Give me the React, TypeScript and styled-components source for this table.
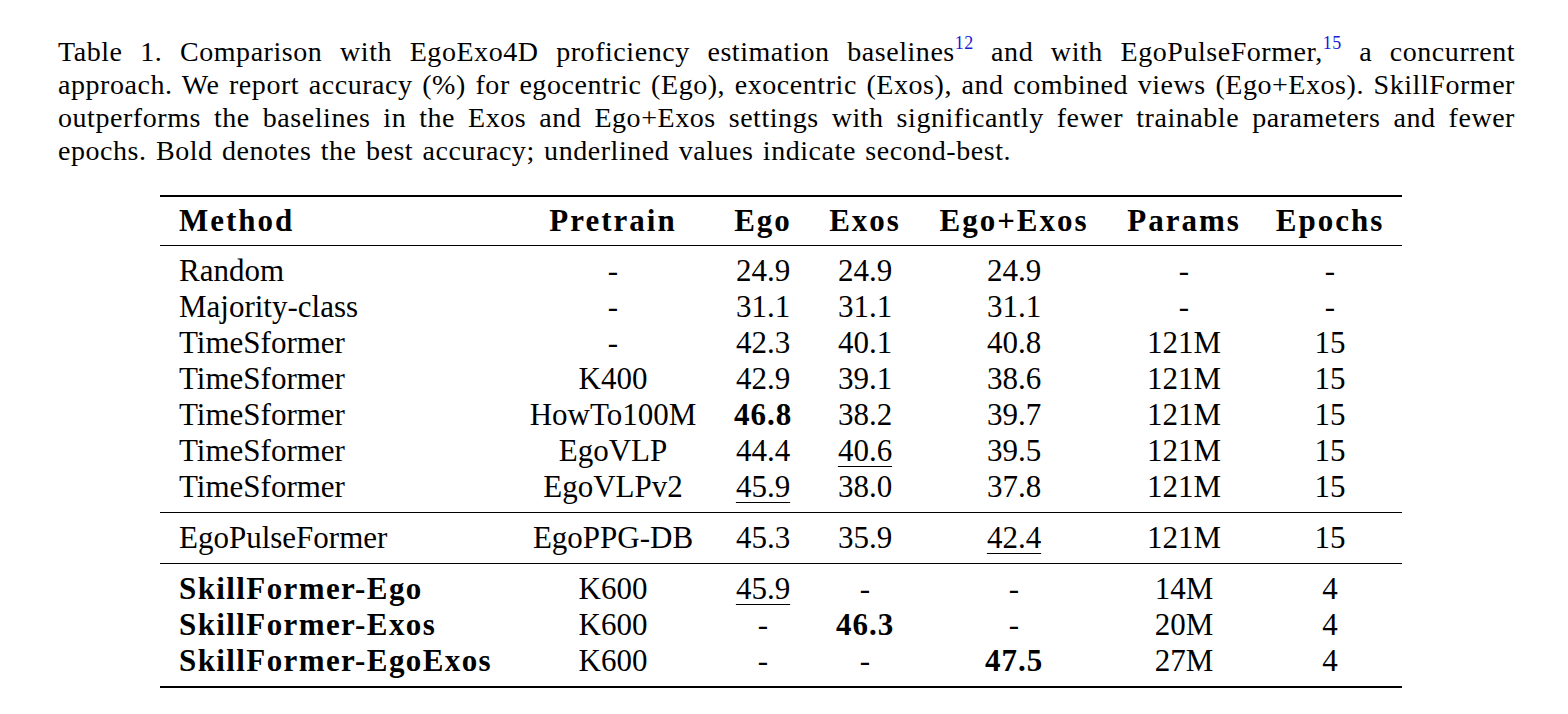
import React from "react";
import styled, { createGlobalStyle, css } from "styled-components";

const Global = createGlobalStyle`
  html, body { margin: 0; padding: 0; background: #ffffff; }
`;

const Page = styled.div`
  padding-top: 35px;
  width: 1568px;
  color: #000;
`;

const Caption = styled.div`
  margin: 0 53px 0 58px;
  font-family: "Liberation Serif";
  font-size: 28px;
  line-height: 33px;
  letter-spacing: 0.55px;
  word-spacing: 1.8px;
`;

const CapLine = styled.div<{ $last?: boolean }>`
  white-space: nowrap;
  text-align: ${(p) => (p.$last ? "left" : "justify")};
  text-align-last: ${(p) => (p.$last ? "left" : "justify")};
`;

const Ref = styled.sup`
  color: #1a1ad6;
  font-size: 18px;
  line-height: 0;
  vertical-align: 12px;
  letter-spacing: 0.3px;
`;

const Table = styled.div`
  width: 1242px;
  margin: 28px 0 0 160px;
  border-top: 2px solid #000;
  border-bottom: 2px solid #000;
  font-family: "Liberation Serif";
  font-size: 31px;
`;

const cols = "352px 202px 98px 106px 192px 148px 144px";

const HeadRow = styled.div`
  display: grid;
  grid-template-columns: ${cols};
  height: 48px;
  align-items: center;
  border-bottom: 1px solid #000;
  font-weight: 700;
  letter-spacing: 2px;
`;

const Group = styled.div<{ $last?: boolean }>`
  padding: 7px 0;
  ${(p) =>
    !p.$last &&
    css`
      border-bottom: 1px solid #000;
    `}
`;

const Row = styled.div`
  display: grid;
  grid-template-columns: ${cols};
  height: 36px;
  align-items: center;
  line-height: 36px;
`;

const Cell = styled.div<{ $first?: boolean; $bold?: boolean; $under?: boolean }>`
  text-align: ${(p) => (p.$first ? "left" : "center")};
  padding-left: ${(p) => (p.$first ? "19px" : "0")};
  white-space: nowrap;
  ${(p) =>
    p.$bold &&
    css`
      font-weight: 700;
      letter-spacing: ${p.$first ? "1.4px" : "1px"};
    `}
  & > span {
    ${(p) =>
      p.$under &&
      css`
        text-decoration: underline;
        text-decoration-thickness: 1px;
        text-underline-offset: 5px;
      `}
  }
`;

type V = string | { v: string; b?: boolean; u?: boolean };

const headers = ["Method", "Pretrain", "Ego", "Exos", "Ego+Exos", "Params", "Epochs"];

const groups: { rows: V[][]; boldMethod?: boolean }[] = [
  {
    rows: [
      ["Random", "-", "24.9", "24.9", "24.9", "-", "-"],
      ["Majority-class", "-", "31.1", "31.1", "31.1", "-", "-"],
      ["TimeSformer", "-", "42.3", "40.1", "40.8", "121M", "15"],
      ["TimeSformer", "K400", "42.9", "39.1", "38.6", "121M", "15"],
      ["TimeSformer", "HowTo100M", { v: "46.8", b: true }, "38.2", "39.7", "121M", "15"],
      ["TimeSformer", "EgoVLP", "44.4", { v: "40.6", u: true }, "39.5", "121M", "15"],
      ["TimeSformer", "EgoVLPv2", { v: "45.9", u: true }, "38.0", "37.8", "121M", "15"],
    ],
  },
  {
    rows: [["EgoPulseFormer", "EgoPPG-DB", "45.3", "35.9", { v: "42.4", u: true }, "121M", "15"]],
  },
  {
    boldMethod: true,
    rows: [
      ["SkillFormer-Ego", "K600", { v: "45.9", u: true }, "-", "-", "14M", "4"],
      ["SkillFormer-Exos", "K600", "-", { v: "46.3", b: true }, "-", "20M", "4"],
      ["SkillFormer-EgoExos", "K600", "-", "-", { v: "47.5", b: true }, "27M", "4"],
    ],
  },
];

export default function App() {
  return (
    <Page>
      <Global />
      <Caption>
        <CapLine>
          Table 1. Comparison with EgoExo4D proficiency estimation baselines<Ref>12</Ref> and with
          EgoPulseFormer,<Ref>15</Ref> a concurrent
        </CapLine>
        <CapLine>
          approach. We report accuracy (%) for egocentric (Ego), exocentric (Exos), and combined views
          (Ego+Exos). SkillFormer
        </CapLine>
        <CapLine>
          outperforms the baselines in the Exos and Ego+Exos settings with significantly fewer trainable
          parameters and fewer
        </CapLine>
        <CapLine $last>
          epochs. Bold denotes the best accuracy; underlined values indicate second-best.
        </CapLine>
      </Caption>
      <Table>
        <HeadRow>
          {headers.map((h, i) => (
            <Cell key={h} $first={i === 0}>
              {h}
            </Cell>
          ))}
        </HeadRow>
        {groups.map((g, gi) => (
          <Group key={gi} $last={gi === groups.length - 1}>
            {g.rows.map((r, ri) => (
              <Row key={ri}>
                {r.map((c, ci) => {
                  const o = typeof c === "string" ? { v: c } : c;
                  const bold = !!o.b || (ci === 0 && !!g.boldMethod);
                  return (
                    <Cell key={ci} $first={ci === 0} $bold={bold} $under={!!o.u}>
                      <span>{o.v}</span>
                    </Cell>
                  );
                })}
              </Row>
            ))}
          </Group>
        ))}
      </Table>
    </Page>
  );
}
